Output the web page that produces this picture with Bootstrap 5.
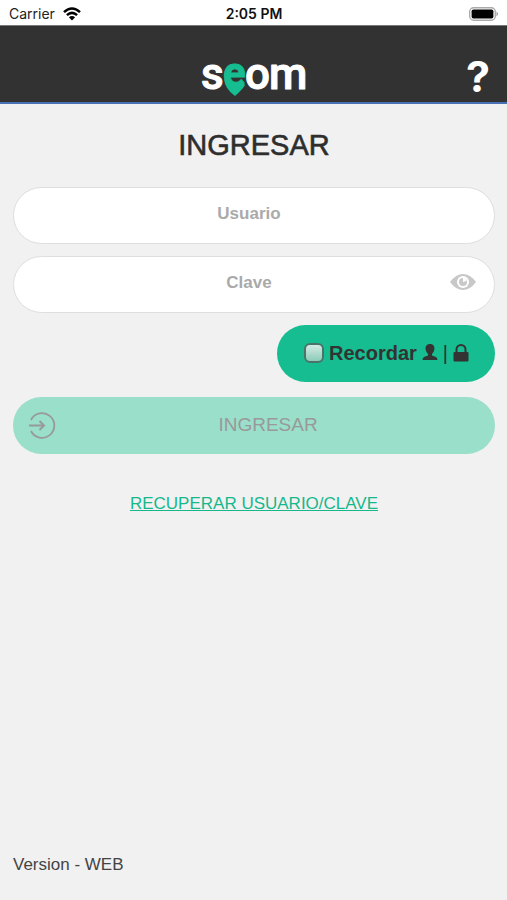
<!DOCTYPE html>
<html lang="es">
<head>
<meta charset="utf-8">
<meta name="viewport" content="width=device-width, initial-scale=1">
<title>seom - Ingresar</title>
<link href="https://cdn.jsdelivr.net/npm/bootstrap@5.3.0/dist/css/bootstrap.min.css" rel="stylesheet">
<style>
  body { background: #f1f1f1; color: #333; font-family: "Liberation Sans", Arial, sans-serif; }
  .status-bar { height: 25px; background: #fff; color: #222; font: 14px/24px Inter, sans-serif; padding: 2px 8px 0 9px; }
  .status-time { color: #111; font-weight: 600; }
  .top-bar { height: 79px; background: #323232; border-top: 1px solid #777; border-bottom: 2px solid #4a70b5; padding: 0 16px; }
  .top-side { width: 26px; }
  .help-btn { height: 52px; color: #fff; font: 700 43px/52px Inter, sans-serif; }
  .page-title { font-size: 29px; line-height: 36px; color: #2e2e2e; -webkit-text-stroke: 0.6px #2e2e2e; }
  .page-body { padding: 23px 12px 20px 13px; }
  .pill { height: 57px; border-radius: 29px; }
  .pill-input, .pill-input:focus { background: #fff; border: 1px solid #dedede; text-align: center; font-size: 17px; font-weight: 700; padding: 0 58px 4px 48px; color: #333; }
  .pill-input::placeholder { color: #aaa; opacity: 1; }
  .form-stack { gap: 12px; margin-top: 24px; }
  .eye-btn { top: 17px; right: 19px; line-height: 0; }
  .remember { background: #16bd90; padding: 0 26px 2px 27px; gap: 5px; font-size: 20px; font-weight: 700; margin-bottom: 3px; }
  .remember-box { appearance: none; width: 20px; height: 20px; border: 2px solid #4a7469; border-radius: 6px; background: linear-gradient(#d5ebe5, #8acbb8); }
  .remember-box:checked { background: #2e6f5e; }
  .enter-btn, .enter-btn:disabled { background: #99dfca; color: #999; font-size: 19px; opacity: 1; border: 0; padding: 0 15px; }
  .enter-side { width: 28px; line-height: 0; }
  .recover { color: #16b88b; font-size: 17px; line-height: 24px; margin-top: 38px; }
  .version { font-size: 17px; line-height: 24px; padding: 0 13px 23px; color: #444; }
  .logo-text { font: 500 44px Roboto, sans-serif; stroke-width: 1px; stroke-linejoin: round; }
  .logo-pin { font: 700 42px Roboto, sans-serif; }
</style>
<script src="https://cdn.jsdelivr.net/npm/bootstrap@5.3.0/dist/js/bootstrap.bundle.min.js"></script>
</head>
<body class="d-flex flex-column min-vh-100">
<div class="status-bar row g-0 align-items-center">
  <div class="col d-flex align-items-center gap-2"><span>Carrier</span>
    <svg width="18" height="14" viewBox="0 0 18 14" fill="none" stroke="#000" stroke-width="2.5" aria-hidden="true"><path d="M1 5.2Q9-2.2 17 5.2M3.900 8.200Q9 3.500 14.100 8.200"/><path d="M5.900 10.200Q9 7.600 12.100 10.200L9 13.600Z" fill="#000" stroke="none"/></svg>
  </div>
  <div class="col-auto status-time">2:05 PM</div>
  <div class="col d-flex justify-content-end">
    <svg width="30" height="14" viewBox="0 0 30 14" aria-hidden="true"><rect x=".7" y=".7" width="25.600" height="12.600" rx="4" fill="#fff" stroke="#aaa" stroke-width="1.400"/><rect x="2.600" y="2.500" width="21.800" height="9" rx="1.800"/><path d="M27.500 4.500Q30.500 7 27.500 9.500Z" fill="#999"/></svg>
  </div>
</div>
<header class="top-bar d-flex justify-content-between align-items-end">
  <div class="top-side"></div>
  <svg width="116" height="70" viewBox="0 0 116 70" role="img" aria-label="seom">
    <g class="logo-text" fill="#fff" stroke="#fff"><text x="5" y="57">s</text><text x="49" y="57">o</text><text x="73" y="57">m</text></g>
    <text class="logo-pin" x="27" y="55" fill="#16bd90" stroke="#16bd90">e</text>
    <path d="M28 47Q32 53 39 52.500L47 50L49 53Q46 58 39 64Q29 57 28 47Z" fill="#16bd90"/>
  </svg>
  <button type="button" class="btn p-0 border-0 top-side help-btn" aria-label="Ayuda">?</button>
</header>
<main class="page-body flex-grow-1">
  <h1 class="page-title text-center fw-normal mb-0">INGRESAR</h1>
  <form class="form-stack d-flex flex-column">
    <input class="form-control pill pill-input" type="text" placeholder="Usuario" aria-label="Usuario">
    <div class="position-relative">
      <input class="form-control pill pill-input" type="password" placeholder="Clave" aria-label="Clave">
      <button type="button" class="btn p-0 border-0 position-absolute eye-btn" aria-label="Mostrar clave">
        <svg width="26" height="18" viewBox="0 0 26 18"><path d="M0 9Q6 1 13 1T26 9Q20 17 13 17T0 9Z" fill="#c8c8c8"/><circle cx="13" cy="9" r="6" fill="#fff"/><circle cx="13" cy="9" r="4" fill="#c8c8c8"/><path d="M13 9V4.500A4 4 0 0 1 16.500 8Z" fill="#fff"/></svg>
      </button>
    </div>
    <label class="remember pill d-flex align-items-center align-self-end" for="remember">
      <input class="remember-box m-0" type="checkbox" id="remember">
      <span>Recordar</span>
      <svg width="16" height="17" viewBox="0 0 16 17" fill="#333" aria-hidden="true"><path d="M8 0C4.800 0 3.300 2.200 3.600 5C3.900 7.500 5 8.800 6 10V11.500L2 13Q.5 13.800.5 16H15.500Q15.500 13.800 14 13L10 11.500V10C11 8.800 12.100 7.500 12.400 5C12.700 2.200 11.200 0 8 0Z"/></svg>
      <span class="fw-normal">|</span>
      <svg width="16" height="18" viewBox="0 0 16 18" aria-hidden="true"><path d="M3.500 9V5.500A4.500 4.500 0 0 1 12.500 5.500V9" fill="none" stroke="#333" stroke-width="2"/><rect x=".5" y="8" width="15" height="9.500" rx="1" fill="#333"/></svg>
    </label>
    <button type="submit" class="btn pill enter-btn w-100 d-flex align-items-center" disabled>
      <span class="enter-side"><svg width="28" height="28" viewBox="0 0 28 28" fill="none" stroke="#999" stroke-width="1.800"><path d="M3 8A12.300 12.300 0 1 1 3 19"/><path d="M1 13.500H16M11.500 9L16 13.500L11.500 18" stroke-width="2"/></svg></span>
      <span class="flex-grow-1">INGRESAR</span>
    </button>
  </form>
  <div class="text-center"><a href="#" class="recover d-inline-block">RECUPERAR USUARIO/CLAVE</a></div>
</main>
<footer class="version">Version - WEB</footer>
</body>
</html>
